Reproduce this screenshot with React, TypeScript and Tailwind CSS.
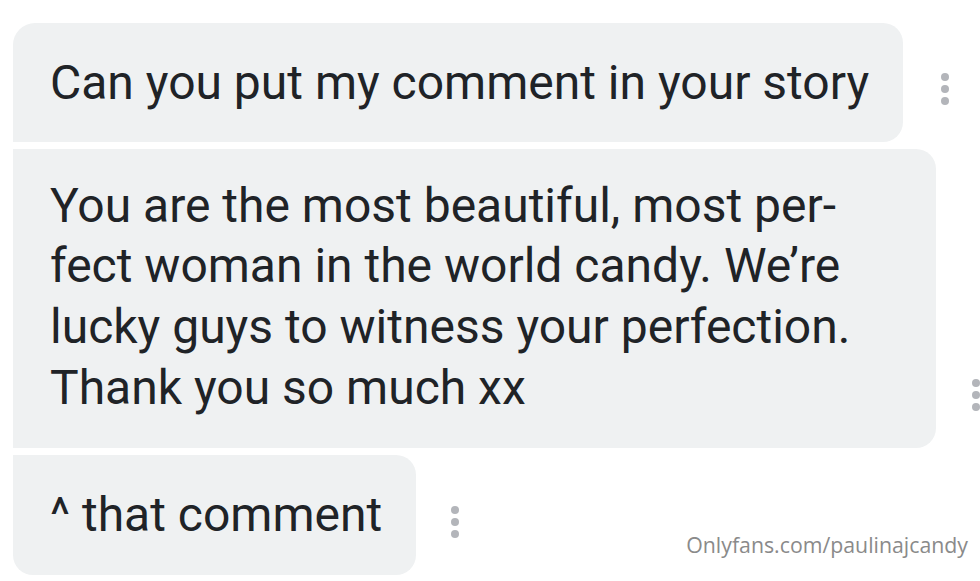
function Dots() {
  return (
    <div className="flex flex-col gap-[4px] mb-[37px]">
      <span className="w-[8px] h-[8px] rounded-full bg-[#b3b5ba]" />
      <span className="w-[8px] h-[8px] rounded-full bg-[#b3b5ba]" />
      <span className="w-[8px] h-[8px] rounded-full bg-[#b3b5ba]" />
    </div>
  );
}

export default function App() {
  return (
    <div
      className="relative w-[980px] h-[581px] overflow-hidden bg-white"
      style={{ fontFamily: "Roboto, 'Noto Sans', sans-serif" }}
    >
      <div className="flex flex-col gap-[7px] pt-[23px] pl-[13px]">
        {/* first */}
        <div className="flex items-end gap-[38px]">
          <div className="w-[890px] h-[119px] flex items-center px-[37px] bg-[#eff1f2] rounded-tl-[22px] rounded-r-[20px] text-[48px] leading-[60px] text-[#202327] whitespace-nowrap">
            Can you put my comment in your story
          </div>
          <Dots />
        </div>

        {/* second */}
        <div className="flex items-end gap-[36px]">
          <div className="w-[923px] h-[299px] flex flex-col justify-center px-[37px] pb-[3px] bg-[#eff1f2] rounded-r-[20px] text-[48px] leading-[60.7px] text-[#202327] whitespace-nowrap">
            <span>You are the most beautiful, most per-</span>
            <span>fect woman in the world candy. We’re</span>
            <span>lucky guys to witness your perfection.</span>
            <span>Thank you so much xx</span>
          </div>
          <Dots />
        </div>

        {/* third */}
        <div className="flex items-end gap-[35px]">
          <div className="w-[403px] h-[120px] flex items-center px-[37px] bg-[#eff1f2] rounded-r-[20px] rounded-bl-[20px] text-[48px] leading-[60px] text-[#202327] whitespace-nowrap">
            ^ that comment
          </div>
          <Dots />
        </div>
      </div>

      <div
        className="absolute right-[12px] top-[529px] text-[21.3px] text-[#8a8a8a]"
        style={{ fontFamily: "'Open Sans', 'Noto Sans', sans-serif" }}
      >
        Onlyfans.com/paulinajcandy
      </div>
    </div>
  );
}
